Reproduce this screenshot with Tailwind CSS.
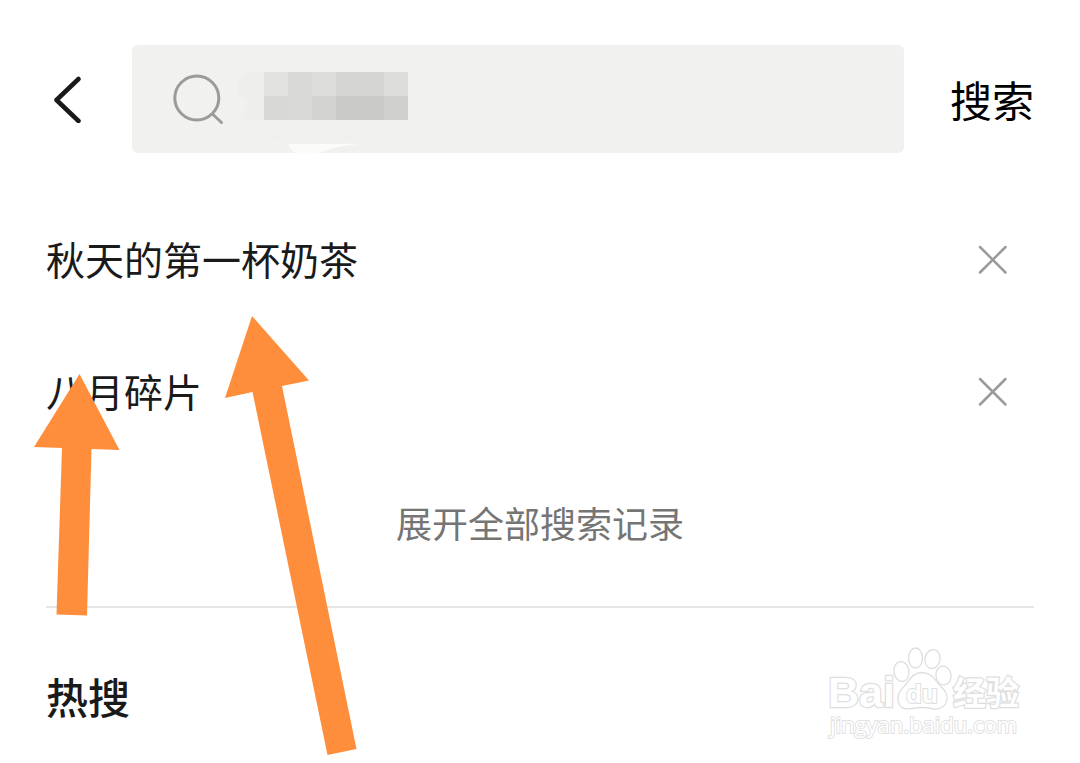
<!DOCTYPE html>
<html lang="zh-CN">

<head>
    <meta charset="UTF-8" />
    <title>搜索</title>
    <script src="https://cdn.jsdelivr.net/npm/@tailwindcss/browser@4"></script>
    <meta name="viewport" content="width=device-width, initial-scale=1.0" />
</head>

<body class="relative min-h-screen overflow-x-hidden bg-white text-[#1a1a1a] font-['Noto_Sans_CJK_SC',sans-serif]">
    <!-- Search bar -->
    <header class="flex items-center pt-[45px] pl-12 pr-[46px]">
        <button type="button" aria-label="返回" class="w-[84px] shrink-0">
            <svg class="w-9 h-12" viewBox="0 0 36 48" fill="none" stroke="#1a1a1a" stroke-width="4.500" stroke-linecap="round" stroke-linejoin="round">
                <path d="M30.500 4 8.500 25 30.500 46" />
            </svg>
        </button>
        <form id="search-form" class="relative flex flex-1 min-w-0 items-center h-[108px] rounded-md bg-[#f1f1f0] pl-10">
            <svg class="w-14 h-14 shrink-0" viewBox="0 0 56 56" fill="none" stroke="#9b9b9a" stroke-width="3" stroke-linecap="round">
                <circle cx="24.800" cy="27" r="22" />
                <path d="M41 43.500 49.500 51.500" />
            </svg>
            <input id="keyword" type="text" aria-label="搜索内容" class="flex-1 min-w-0 h-full px-4 text-4xl bg-transparent outline-none" />
            <!-- Masked keyword -->
            <svg class="absolute left-[100px] top-0 w-[200px] h-[110px] pointer-events-none" viewBox="0 0 200 110" aria-hidden="true">
                <path d="M10 28Q90 20 180 28Q196 45 186 66Q150 95 80 100Q20 95 11 76L18 58 6 50Q2 38 10 28Z" fill="#f0f0ef" />
                <path d="M32 28H12Q4 40 7 50L18 56 10 75H32Z" fill="#eeeeed" />
                <g shape-rendering="crispEdges">
                    <path d="M32 27h24v24H32z" fill="#e2e2e1" />
                    <path d="M56 27h24v24H56z" fill="#d9d9d8" />
                    <path d="M80 27h24v24H80z" fill="#dddddc" />
                    <path d="M104 27h48v24h-48z" fill="#d5d5d4" />
                    <path d="M152 27h24v24h-24z" fill="#dcdcdb" />
                    <path d="M32 51h24v24H32z" fill="#d8d8d7" />
                    <path d="M56 51h24v24H56z" fill="#d9d9d8" />
                    <path d="M80 51h24v24H80z" fill="#d2d2d1" />
                    <path d="M104 51h48v24h-48z" fill="#cacac9" />
                    <path d="M152 51h24v24h-24z" fill="#d0d0cf" />
                </g>
                <path d="M56 99H126Q100 102 86 108.500L64 109Q58 104 56 99Z" fill="#fbfbfa" />
            </svg>
        </form>
        <button type="submit" form="search-form" class="ml-[46px] shrink-0 text-[42px] leading-[60px] text-black">搜索</button>
    </header>

    <main class="px-[46px] pt-[41px]">
        <!-- History -->
        <ul id="history">
            <li class="flex items-center justify-between h-[132px]">
                <a href="#" class="pb-1 text-[39px] leading-[60px]">秋天的第一杯奶茶</a>
                <button type="button" aria-label="删除 秋天的第一杯奶茶" class="mr-6">
                    <svg class="w-9 h-9" viewBox="0 0 36 36" fill="none" stroke="#9b9b9b" stroke-width="2.500" stroke-linecap="round">
                        <path d="M6 5 31.500 30.500M31.500 5 6 30.500" />
                    </svg>
                </button>
            </li>
            <li class="flex items-center justify-between h-[132px]">
                <a href="#" class="pb-1 text-[39px] leading-[60px]">八月碎片</a>
                <button type="button" aria-label="删除 八月碎片" class="mr-6">
                    <svg class="w-9 h-9" viewBox="0 0 36 36" fill="none" stroke="#9b9b9b" stroke-width="2.500" stroke-linecap="round">
                        <path d="M6 5 31.500 30.500M31.500 5 6 30.500" />
                    </svg>
                </button>
            </li>
        </ul>
        <div class="flex justify-center items-center h-[132px]">
            <button type="button" class="pb-1 text-4xl leading-[60px] text-[#757575]">展开全部搜索记录</button>
        </div>

        <!-- Hot searches -->
        <section class="mt-4 border-t-2 border-[#e6e6e6] pt-[58px]">
            <h2 class="text-[42px] leading-[60px] font-medium">热搜</h2>
        </section>
    </main>

    <!-- Arrows -->
    <svg class="absolute left-[30px] top-[370px] w-[94px] h-[250px] pointer-events-none" viewBox="30 370 94 250" aria-hidden="true">
        <path d="M79.500 374 119.500 450 91.500 449 87 615.500 56.500 614.500 62 448 34 447Z" fill="#ff8e3c" />
    </svg>
    <svg class="absolute left-[220px] top-[310px] w-[140px] h-[450px] pointer-events-none" viewBox="220 310 140 450" aria-hidden="true">
        <path d="M252 316 309 380.500 282 386 356.500 749 327.500 755 252.500 392 225 398Z" fill="#ff8e3c" />
    </svg>

    <!-- Watermark -->
    <svg class="absolute right-[50px] top-[640px] w-[210px] h-[105px] pointer-events-none" viewBox="820 640 210 105" fill="#fff" stroke="#dedede" stroke-width="1.300" role="img" aria-label="Baidu 经验">
        <text x="828" y="707" font-family="Liberation Sans" font-weight="bold" font-size="43" stroke-width="2.500" paint-order="stroke">Bai</text>
        <ellipse cx="901.500" cy="671.500" rx="7.500" ry="10" transform="rotate(-8 901.500 671.500)" />
        <ellipse cx="915.500" cy="658" rx="7" ry="10" />
        <ellipse cx="932.500" cy="659" rx="7.500" ry="9.500" transform="rotate(12 932.500 659)" />
        <ellipse cx="943.500" cy="675.500" rx="7.500" ry="9.500" transform="rotate(-8 943.500 675.500)" />
        <path d="M921 672.500C914 673 910 678 907 683C903 688 897 692 898 700C899 708 905 710 912 708.500Q922 706.500 931 708.500C939 710.500 946 707 947 699C948 691 941 688 937 682C933 676 929 672.500 921 672.500Z" />
        <text x="906" y="703" font-family="Liberation Sans" font-weight="bold" font-size="26" stroke-width="2" paint-order="stroke">du</text>
        <text x="953" y="705" font-family="Noto Sans CJK SC" font-weight="bold" font-size="33" stroke-width="2.500" paint-order="stroke">经验</text>
        <text x="830" y="733" font-family="Open Sans" font-size="22" stroke="#e2e2e2" stroke-width="2" paint-order="stroke">jingyan.baidu.com</text>
    </svg>
</body>

</html>
